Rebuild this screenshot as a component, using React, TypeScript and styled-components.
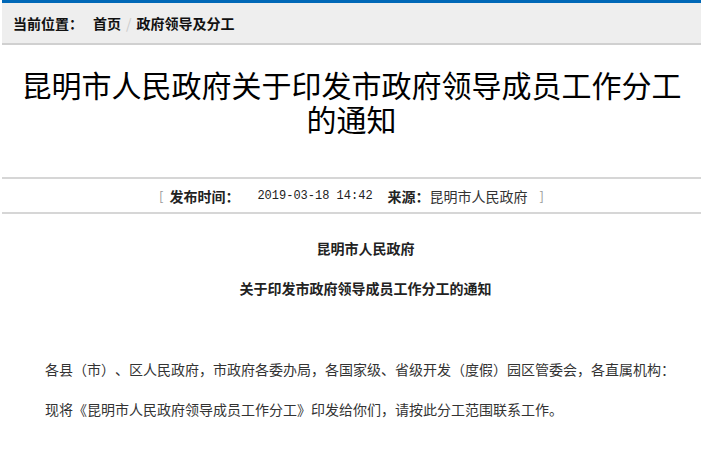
import React from 'react';
import styled, { createGlobalStyle } from 'styled-components';

const GlobalStyle = createGlobalStyle`
  body {
    margin: 0;
    background: #fff;
    font-family: "Noto Sans CJK SC", "Liberation Sans", sans-serif;
    color: #333;
    text-spacing-trim: space-all;
  }
`;

const CJK = `"Noto Sans CJK SC", "Liberation Sans", sans-serif`;

export default function App() {
  return (
    <>
      <GlobalStyle />
      <Wrapper>
        <Breadcrumb>
          <CrumbLabel>当前位置：</CrumbLabel>
          <CrumbLink>首页</CrumbLink>
          <CrumbSep>/</CrumbSep>
          <CrumbLink>政府领导及分工</CrumbLink>
        </Breadcrumb>

        <Title>昆明市人民政府关于印发市政府领导成员工作分工的通知</Title>

        <MetaRow>
          <Bracket>[</Bracket>
          <MetaLabel>发布时间：</MetaLabel>
          <MetaDate>2019-03-18 14:42</MetaDate>
          <MetaLabel>来源：</MetaLabel>
          <MetaValue>昆明市人民政府</MetaValue>
          <Bracket $right>]</Bracket>
        </MetaRow>

        <Article>
          <CenterLine>昆明市人民政府</CenterLine>
          <CenterLine>关于印发市政府领导成员工作分工的通知</CenterLine>
          <Para $first>各县（市）、区人民政府，市政府各委办局，各国家级、省级开发（度假）园区管委会，各直属机构：</Para>
          <Para>现将《昆明市人民政府领导成员工作分工》印发给你们，请按此分工范围联系工作。</Para>
        </Article>
      </Wrapper>
    </>
  );
}

const Wrapper = styled.main`
  margin: 0 2px;
`;

const Breadcrumb = styled.nav`
  display: flex;
  align-items: center;
  height: 40px;
  padding-left: 11px;
  background: #eeeeee;
  border-top: 3px solid #0068b7;
  border-bottom: 2px solid #d0d0d0;
  font-family: ${CJK};
  font-size: 14px;
  font-weight: bold;
  color: #111;
`;

const CrumbLabel = styled.span`
  margin-right: 10px;
`;

const CrumbLink = styled.span`
  color: #111;
`;

const CrumbSep = styled.span`
  margin: 0 5px;
  color: #ccc;
  font-weight: normal;
`;

const Title = styled.h1`
  margin: 22px 0 0;
  padding: 0 10px 42px;
  text-align: center;
  font-family: ${CJK};
  font-size: 30px;
  font-weight: normal;
  line-height: 34px;
  color: #000;
  border-bottom: 2px solid #d6d6d6;
`;

const MetaRow = styled.div`
  display: flex;
  justify-content: center;
  align-items: center;
  height: 33px;
  border-bottom: 2px solid #d6d6d6;
  font-family: ${CJK};
  font-size: 14px;
  color: #333;
`;

const Bracket = styled.span<{ $right?: boolean }>`
  color: #999;
  font-size: 13px;
  margin: ${p => (p.$right ? '0 0 0 12px' : '0 6px 0 0')};
`;

const MetaLabel = styled.span`
  font-weight: bold;
  color: #222;
`;

const MetaDate = styled.span`
  font-family: "Liberation Mono", "DejaVu Sans Mono", monospace;
  font-size: 12px;
  color: #222;
  margin: 0 15px 0 18px;
`;

const MetaValue = styled.span`
  color: #333;
`;

const Article = styled.article`
  padding: 22px 15px 0;
  font-family: ${CJK};
  font-size: 14px;
  color: #333;
`;

const CenterLine = styled.p`
  margin: 0 0 16px;
  text-align: center;
  text-indent: 2em;
  font-weight: bold;
  line-height: 24px;
  color: #222;
`;

const Para = styled.p<{ $first?: boolean }>`
  margin: ${p => (p.$first ? '57px 0 0' : '16px 0 0')};
  text-indent: 2em;
  line-height: 24px;
  white-space: nowrap;
`;
